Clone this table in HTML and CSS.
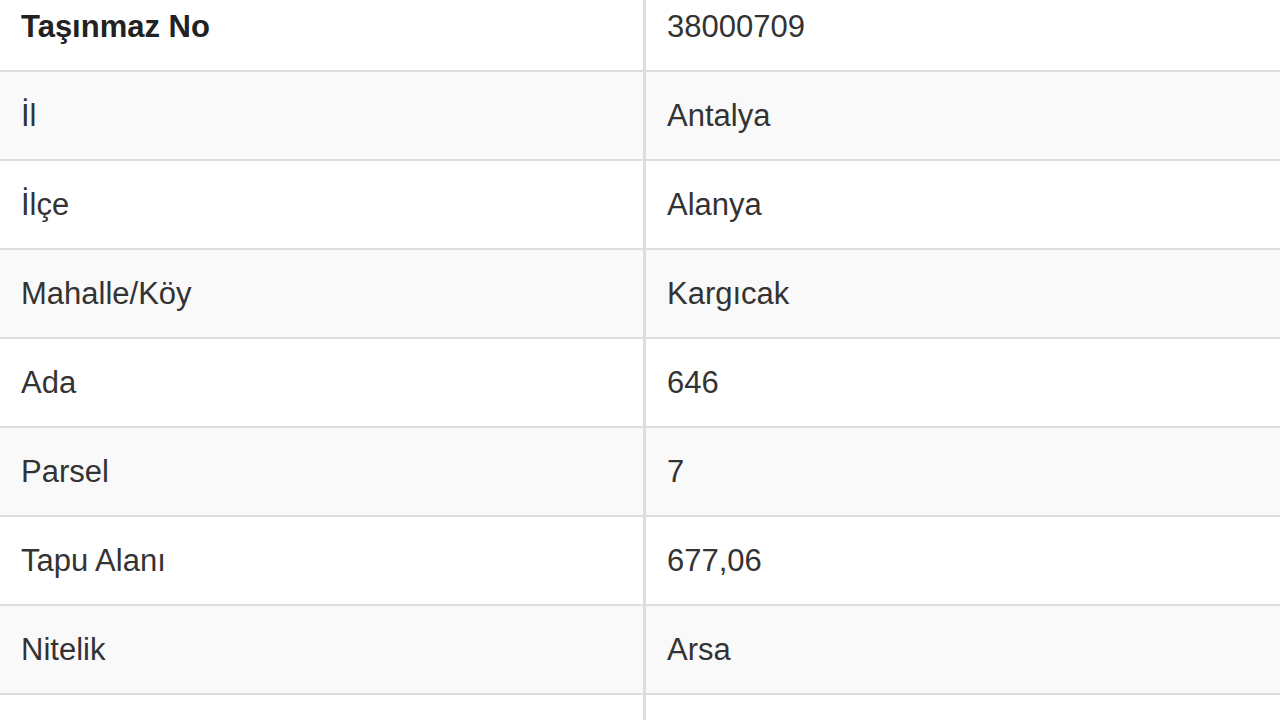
FILE: index.html
```html
<!DOCTYPE html>
<html lang="tr">
<head>
<meta charset="utf-8">
<title>Taşınmaz Bilgileri</title>
<link rel="stylesheet" href="styles.css">
</head>
<body>
<div class="wrap">
<table class="info">
<tbody>
<tr><th class="label">Taşınmaz No</th><td class="value">38000709</td></tr>
<tr><td class="label">İl</td><td class="value">Antalya</td></tr>
<tr><td class="label">İlçe</td><td class="value">Alanya</td></tr>
<tr><td class="label">Mahalle/Köy</td><td class="value">Kargıcak</td></tr>
<tr><td class="label">Ada</td><td class="value">646</td></tr>
<tr><td class="label">Parsel</td><td class="value">7</td></tr>
<tr><td class="label">Tapu Alanı</td><td class="value">677,06</td></tr>
<tr><td class="label">Nitelik</td><td class="value">Arsa</td></tr>
<tr><td class="label">Mevkii</td><td class="value"></td></tr>
</tbody>
</table>
</div>
</body>
</html>
```
FILE: styles.css
```css
html, body {
  margin: 0;
  padding: 0;
  background: #ffffff;
  overflow: hidden;
}

.wrap {
  margin-top: -19px;
  width: 1320px;
}

.info {
  border-collapse: collapse;
  width: 100%;
  font-family: "Liberation Sans", Arial, sans-serif;
  font-size: 31px;
  color: #333333;
}

.info td,
.info th {
  height: 87px;
  padding: 0 21px;
  border-top: 2px solid #dddddd;
  text-align: left;
  vertical-align: middle;
  font-weight: normal;
  line-height: 1.2;
}

.info th {
  font-weight: bold;
  color: #222222;
}

.info .label {
  width: 601px;
}

.info .value {
  border-left: 3px solid #dddddd;
}

.info tr:nth-child(even) td,
.info tr:nth-child(even) th {
  background: #f9f9f9;
}
```
